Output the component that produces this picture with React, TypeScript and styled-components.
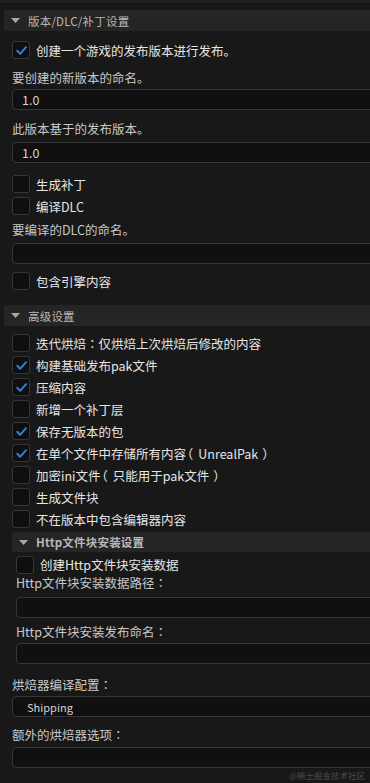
import React from 'react';
import styled, { createGlobalStyle } from 'styled-components';

const GlobalStyle = createGlobalStyle`
  html, body {
    margin: 0;
    padding: 0;
    background: #181818;
  }
`;

const Page = styled.div`
  position: relative;
  width: 370px;
  height: 783px;
  overflow: hidden;
  background: #181818;
  font-family: 'Noto Sans CJK SC', 'Noto Sans', sans-serif;
  text-spacing-trim: space-all;
  display: flex;
  flex-direction: column;
`;

const TopStrip = styled.div`
  height: 3px;
  background: #1f1f1f;
  border-bottom: 1px solid #131313;
`;

const Header = styled.div<{ $indent?: number; $mt?: number; $h?: number }>`
  display: flex;
  align-items: center;
  gap: 8px;
  height: ${(p) => p.$h ?? 21}px;
  margin-top: ${(p) => p.$mt ?? 0}px;
  margin-left: ${(p) => p.$indent ?? 4}px;
  padding-left: 7px;
  background: #252525;
  border-radius: 3px 0 0 3px;
  color: #b8b8b8;
  font-size: 11.5px;

  svg {
    flex: none;
  }
`;

const HeaderTitle = styled.span<{ $bold?: boolean }>`
  font-weight: ${(p) => (p.$bold ? 700 : 400)};
  letter-spacing: 0.2px;
`;

const Body = styled.div<{ $indent?: number }>`
  display: flex;
  flex-direction: column;
  padding-left: ${(p) => p.$indent ?? 12}px;
`;

const Row = styled.label<{ $mt?: number; $h?: number }>`
  display: flex;
  align-items: center;
  gap: 6px;
  height: ${(p) => p.$h ?? 22}px;
  margin-top: ${(p) => p.$mt ?? 0}px;
  color: #e6e6e6;
  font-size: 12.5px;
  white-space: nowrap;
`;

const Box = styled.span`
  display: flex;
  align-items: center;
  justify-content: center;
  width: 16px;
  height: 16px;
  flex: none;
  background: #0f0f0f;
  border: 1px solid #363636;
  border-radius: 3px;
`;

const FieldLabel = styled.div<{ $mt?: number; $h?: number }>`
  height: ${(p) => p.$h ?? 18}px;
  line-height: ${(p) => p.$h ?? 18}px;
  margin-top: ${(p) => p.$mt ?? 0}px;
  color: #c8c8c8;
  font-size: 12.5px;
  white-space: nowrap;
`;

// 全角标点居中显示（和原图一致）
const Punct = styled.span<{ $kind: 'colon' | 'open' | 'close' }>`
  font-family: 'Noto Sans CJK TC', 'Noto Sans CJK SC', sans-serif;
  font-feature-settings: ${(p) => (p.$kind === 'open' ? "'halt'" : 'normal')};
  padding-left: ${(p) => (p.$kind === 'open' ? 1 : p.$kind === 'close' ? 4 : 0)}px;
  padding-right: ${(p) => (p.$kind === 'open' ? 5 : 0)}px;
`;

const Field = styled.div<{ $mt?: number; $small?: boolean }>`
  display: flex;
  align-items: center;
  height: 19px;
  margin-top: ${(p) => p.$mt ?? 0}px;
  margin-right: -8px;
  padding-left: ${(p) => (p.$small ? 14 : 9)}px;
  background: #101010;
  border: 1px solid #363636;
  border-radius: 4px;
  color: #d4d4d4;
  font-size: ${(p) => (p.$small ? 11 : 12.5)}px;
`;

const Watermark = styled.div`
  position: absolute;
  right: 5px;
  bottom: 2px;
  color: #4c4c4c;
  font-size: 8.5px;
`;

const Caret = () => (
  <svg width="9" height="5" viewBox="0 0 9 5">
    <path d="M0 0 L9 0 L4.5 5 Z" fill="#a8a8a8" />
  </svg>
);

const punctKind = { '：': 'colon', '（': 'open', '）': 'close' } as const;

const withPunct = (text: string) =>
  text.split(/([：（）])/).map((part, i) =>
    part in punctKind ? (
      <Punct key={i} $kind={punctKind[part as keyof typeof punctKind]}>
        {part}
      </Punct>
    ) : (
      part
    )
  );

const Check = ({ checked, label, mt, h }: { checked?: boolean; label: string; mt?: number; h?: number }) => (
  <Row $mt={mt} $h={h}>
    <Box>
      {checked && (
        <svg width="13" height="13" viewBox="0 0 13 13">
          <path d="M2.2 6.8 L5.2 9.8 L11 3.2" fill="none" stroke="#2f82d9" strokeWidth="2" strokeLinecap="round" strokeLinejoin="round" />
        </svg>
      )}
    </Box>
    <span>{withPunct(label)}</span>
  </Row>
);

const advanced: [string, boolean][] = [
  ['迭代烘焙：仅烘焙上次烘焙后修改的内容', false],
  ['构建基础发布pak文件', true],
  ['压缩内容', true],
  ['新增一个补丁层', false],
  ['保存无版本的包', true],
  ['在单个文件中存储所有内容（UnrealPak）', true],
  ['加密ini文件（只能用于pak文件）', false],
  ['生成文件块', false],
  ['不在版本中包含编辑器内容', false],
];

const App: React.FC = () => {
  return (
    <Page>
      <GlobalStyle />
      <TopStrip />

      {/* 版本设置 */}
      <Header $mt={6}>
        <Caret />
        <HeaderTitle>版本/DLC/补丁设置</HeaderTitle>
      </Header>
      <Body>
        <Check checked label="创建一个游戏的发布版本进行发布。" mt={8} />
        <FieldLabel $mt={8}>要创建的新版本的命名。</FieldLabel>
        <Field $mt={2}>1.0</Field>
        <FieldLabel $mt={10}>此版本基于的发布版本。</FieldLabel>
        <Field $mt={4}>1.0</Field>
        <Check label="生成补丁" mt={10} />
        <Check label="编译DLC" />
        <FieldLabel $mt={4}>要编译的DLC的命名。</FieldLabel>
        <Field $mt={4} />
        <Check label="包含引擎内容" mt={6} />
      </Body>

      {/* 高级设置 */}
      <Header $mt={13}>
        <Caret />
        <HeaderTitle>高级设置</HeaderTitle>
      </Header>
      <Body>
        {advanced.map(([label, checked], i) => (
          <Check key={label} label={label} checked={checked} mt={i === 0 ? 6 : 0} />
        ))}
      </Body>

      <Header $indent={12} $mt={2} $h={20}>
        <Caret />
        <HeaderTitle $bold>Http文件块安装设置</HeaderTitle>
      </Header>
      <Body $indent={16}>
        <Check label="创建Http文件块安装数据" mt={3} h={19} />
        <FieldLabel $mt={2} $h={14}>{withPunct('Http文件块安装数据路径：')}</FieldLabel>
        <Field $mt={7} />
        <FieldLabel $mt={5}>{withPunct('Http文件块安装发布命名：')}</FieldLabel>
        <Field $mt={2} />
      </Body>

      <Body>
        <FieldLabel $mt={12}>{withPunct('烘焙器编译配置：')}</FieldLabel>
        <Field $mt={2} $small>
          Shipping
        </Field>
        <FieldLabel $mt={9}>{withPunct('额外的烘焙器选项：')}</FieldLabel>
        <Field $mt={3} />
      </Body>

      <Watermark>@稀土掘金技术社区</Watermark>
    </Page>
  );
};

export default App;
